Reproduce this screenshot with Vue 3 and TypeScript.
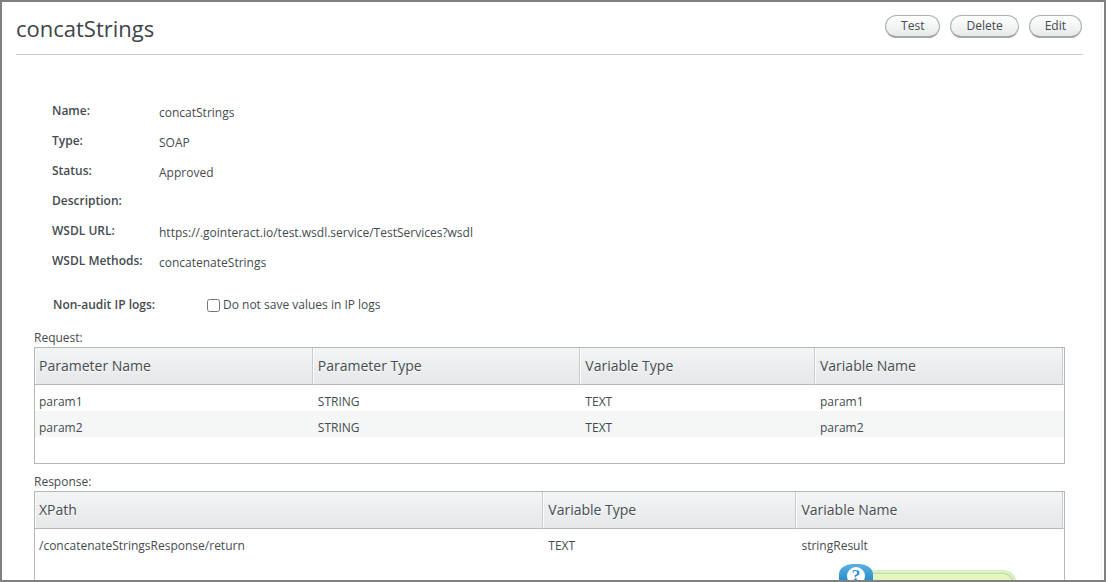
<script setup lang="ts">
import { ref } from 'vue'

interface Detail {
  label: string
  value: string
}

const actions: string[] = ['Test', 'Delete', 'Edit']

const details: Detail[] = [
  { label: 'Name:', value: 'concatStrings' },
  { label: 'Type:', value: 'SOAP' },
  { label: 'Status:', value: 'Approved' },
  { label: 'Description:', value: '' },
  { label: 'WSDL URL:', value: 'https://.gointeract.io/test.wsdl.service/TestServices?wsdl' },
  { label: 'WSDL Methods:', value: 'concatenateStrings' },
]

const requestColumns: string[] = ['Parameter Name', 'Parameter Type', 'Variable Type', 'Variable Name']
const requestRows: string[][] = [
  ['param1', 'STRING', 'TEXT', 'param1'],
  ['param2', 'STRING', 'TEXT', 'param2'],
]

const responseColumns: string[] = ['XPath', 'Variable Type', 'Variable Name']
const responseRows: string[][] = [['/concatenateStringsResponse/return', 'TEXT', 'stringResult']]

const skipLogs = ref(false)
</script>

<template>
  <main class="frame">
    <div class="page">
      <header class="header">
        <h1 class="title">concatStrings</h1>
        <div class="actions">
          <button v-for="action in actions" :key="action" type="button" class="action">{{ action }}</button>
        </div>
      </header>

      <dl class="details">
        <div v-for="item in details" :key="item.label" class="detail">
          <dt>{{ item.label }}</dt>
          <dd>{{ item.value }}</dd>
        </div>
      </dl>

      <div class="logs">
        <span class="logs-title">Non-audit IP logs:</span>
        <input id="skip-logs" v-model="skipLogs" class="check" type="checkbox" />
        <label for="skip-logs">Do not save values in IP logs</label>
      </div>

      <section class="block">
        <h2 class="caption">Request:</h2>
        <div class="grid request">
          <table>
            <colgroup>
              <col class="req-a" />
              <col class="req-b" />
              <col class="req-c" />
              <col />
            </colgroup>
            <thead>
              <tr>
                <th v-for="column in requestColumns" :key="column" scope="col">{{ column }}</th>
              </tr>
            </thead>
            <tbody>
              <tr v-for="(row, r) in requestRows" :key="r">
                <td v-for="(cell, c) in row" :key="c">{{ cell }}</td>
              </tr>
            </tbody>
          </table>
        </div>
      </section>

      <section class="block">
        <h2 class="caption">Response:</h2>
        <div class="grid response">
          <table>
            <colgroup>
              <col class="res-a" />
              <col class="res-b" />
              <col />
            </colgroup>
            <thead>
              <tr>
                <th v-for="column in responseColumns" :key="column" scope="col">{{ column }}</th>
              </tr>
            </thead>
            <tbody>
              <tr v-for="(row, r) in responseRows" :key="r">
                <td v-for="(cell, c) in row" :key="c">{{ cell }}</td>
              </tr>
            </tbody>
          </table>
          <aside class="hint">
            <span class="hint-icon"><span class="hint-mark">?</span></span>
            <span class="hint-body"></span>
          </aside>
        </div>
      </section>
    </div>
  </main>
</template>

<style>
body {
  margin: 0;
  background: #fff;
}
</style>

<style scoped>
.frame {
  box-sizing: border-box;
  height: 100vh;
  padding-right: 2px;
  overflow: hidden;
  border: 2px solid #808080;
  color: #444b4f;
  font: 12px/20px "Trebuchet MS", "Open Sans", sans-serif;
}

.page {
  min-height: 100%;
  padding: 0 18px 0 14px;
  border-right: 1px solid #f0f0f0;
}

.header {
  display: flex;
  justify-content: space-between;
  align-items: center;
  height: 52px;
  border-bottom: 1px solid #c3cccc;
}

.title {
  margin: 0;
  color: #3c4548;
  font-size: 22px;
  font-weight: 400;
  line-height: 28px;
}

.actions {
  display: flex;
  gap: 10px;
  padding: 0 1px 4px 0;
}

.action {
  height: 23px;
  padding: 0 15px;
  border: 1px solid #aab0b0;
  border-bottom: 2px solid #a3aaaa;
  border-radius: 12px;
  background: linear-gradient(#fff, #e7eaea);
  color: #444b4f;
  font: inherit;
  line-height: 18px;
}

.details {
  margin: 41px 0 0 36px;
}

.detail {
  display: flex;
  align-items: center;
  height: 30px;
}

.detail dt {
  width: 107px;
  font-weight: 600;
}

.detail dd {
  margin: 0;
  padding-top: 4px;
}

.logs {
  display: flex;
  align-items: center;
  height: 30px;
  margin: 14px 0 8px 37px;
}

.logs-title {
  width: 154px;
  font-weight: 600;
}

.check {
  width: 13px;
  height: 13px;
  margin: 0 3px 0 0;
}

.block {
  margin: 0 18px;
}

.block + .block {
  margin-top: 8px;
}

.caption {
  margin: 0;
  font-size: 12px;
  font-weight: 400;
  line-height: 19px;
}

.request {
  padding-bottom: 26px;
}

.grid {
  position: relative;
  border: 1px solid #b2b8b8;
}

.response {
  min-height: 140px;
}

table {
  width: 100%;
  table-layout: fixed;
  border-collapse: separate;
  border-spacing: 0;
}

.req-a { width: 27%; }
.req-b { width: 26%; }
.req-c { width: 22.8%; }
.res-a { width: 49.4%; }
.res-b { width: 24.6%; }

th {
  box-sizing: border-box;
  height: 37px;
  padding: 0 5px;
  border-right: 1px solid #c9cdcd;
  border-bottom: 1px solid #b2b8b8;
  background: linear-gradient(#f3f4f5, #e5e7e8);
  box-shadow: inset 1px 0 #fafbfb;
  font-size: 14px;
  font-weight: 400;
  text-align: left;
  text-shadow: 0 1px #fff;
}

th:last-child {
  border-right-color: #fafbfb;
  box-shadow: inset 1px 0 #fafbfb, inset -1px 0 #c9cdcd;
}

td {
  box-sizing: border-box;
  height: 26px;
  padding: 7px 5px 0;
  line-height: 19px;
}

th:first-child,
td:first-child {
  padding-left: 4px;
}

tbody tr:nth-child(even) {
  background: #f5f7f7;
}

.hint {
  position: absolute;
  top: 72px;
  right: 47px;
  display: flex;
  align-items: flex-start;
  width: 178px;
}

.hint-icon {
  display: flex;
  justify-content: center;
  flex: none;
  width: 34px;
  height: 40px;
  border-radius: 14px 14px 0 0 / 10px 10px 0 0;
  background: linear-gradient(#5eb0e0, #1f86c8 20px);
}

.hint-mark {
  width: 18px;
  height: 18px;
  margin-top: 3px;
  border-radius: 50%;
  background: #fff;
  color: #2d8fd0;
  font: 700 17px/18px "Liberation Serif", serif;
  text-align: center;
}

.hint-body {
  flex: 1;
  height: 40px;
  margin-top: 6px;
  border: 3px solid #d9efc4;
  border-left: 0;
  border-radius: 0 14px 0 0;
  background: #e5f6c0;
  box-shadow: inset -1px 1px #c3dba6;
}
</style>
